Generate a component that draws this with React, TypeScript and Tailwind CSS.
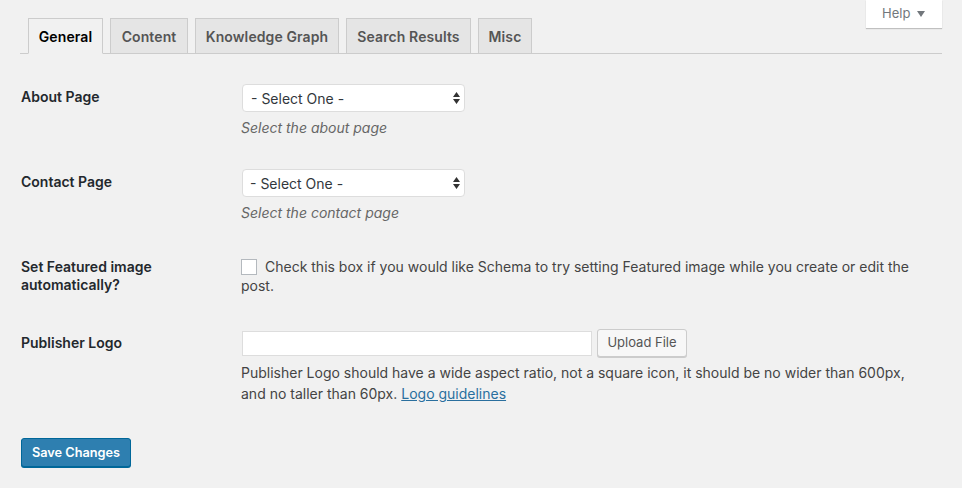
const tabs = [
  { label: 'General', width: 'w-[75px]' },
  { label: 'Content', width: 'w-[78px]' },
  { label: 'Knowledge Graph', width: 'w-[144px]' },
  { label: 'Search Results', width: 'w-[125px]' },
  { label: 'Misc', width: 'w-[54px]' },
];

export default function App() {
  return (
    <div className="relative w-[962px] h-[488px] overflow-hidden bg-[#f1f1f1] font-['Inter',sans-serif] text-[14px] text-[#444]">
      <div className="absolute left-[866px] top-0 w-[76px] h-[28px] bg-white shadow-[0_1px_1px_rgba(0,0,0,0.2)] flex items-center pl-[16px] gap-[7px] text-[13px] text-[#72777c]">
        Help <span className="w-0 h-0 border-x-[4px] border-x-transparent border-t-[6px] border-t-[#72777c]" />
      </div>
      <div className="ml-[20px] mr-[20px] h-[54px] border-b border-[#ccc] flex items-end pl-[8px] gap-[7px]">
        {tabs.map((t, i) => (
          <div key={t.label} className={`${t.width} h-[36px] -mb-px border border-[#ccc] font-semibold tracking-[0.1px] flex items-center justify-center ${i === 0 ? 'border-b-[#f1f1f1] bg-[#f1f1f1] text-[#000]' : 'bg-[#e5e5e5] text-[#555]'}`}>{t.label}</div>
        ))}
      </div>
      <div className="ml-[21px] mr-[20px] flex flex-col">
        <div className="flex mt-[30px]">
          <div className="w-[221px] font-semibold text-[#23282d] leading-[20px] pt-[3px]">About Page</div>
          <div>
            <div className="w-[223px] h-[28px] bg-white border border-[#ddd] rounded-[4px] flex items-center justify-between pl-[8px] pr-[4px] text-[#32373c]">- Select One - <Arrows /></div>
            <div className="italic text-[#666] mt-[6px] -ml-px leading-[20px]">Select the about page</div>
          </div>
        </div>
        <div className="flex mt-[31px]">
          <div className="w-[221px] font-semibold text-[#23282d] leading-[20px] pt-[3px]">Contact Page</div>
          <div>
            <div className="w-[223px] h-[28px] bg-white border border-[#ddd] rounded-[4px] flex items-center justify-between pl-[7px] pr-[4px] text-[#32373c]">- Select One - <Arrows /></div>
            <div className="italic text-[#666] mt-[6px] -ml-px leading-[20px]">Select the contact page</div>
          </div>
        </div>
        <div className="flex mt-[34px]">
          <div className="w-[220px] font-semibold text-[#23282d] leading-[18px] pt-[1px]">Set Featured image<br />automatically?</div>
          <div className="w-[680px] leading-[19px]">
            <span className="inline-block w-[16px] h-[16px] bg-white border border-[#b4b9be] align-[-3px] mr-[8px]" />
            Check this box if you would like Schema to try setting Featured image while you create or edit the post.
          </div>
        </div>
        <div className="flex mt-[34px]">
          <div className="w-[221px] font-semibold text-[#23282d] leading-[20px] pt-[4px]">Publisher Logo</div>
          <div className="w-[680px]">
            <div className="flex items-center gap-[5px]">
              <div className="w-[350px] h-[25px] bg-white border border-[#ddd]" />
              <div className="h-[28px] w-[90px] bg-[#f7f7f7] border border-[#ccc] rounded-[3px] text-[13px] text-[#555] flex items-center justify-center shadow-[0_1px_0_#ccc]">Upload File</div>
            </div>
            <div className="mt-[5px] -ml-px leading-[21px]">Publisher Logo should have a wide aspect ratio, not a square icon, it should be no wider than 600px, and no taller than 60px. <span className="underline text-[#2a6f9e]">Logo guidelines</span></div>
          </div>
        </div>
        <div className="mt-[34px] w-[110px] h-[29px] bg-[#2e7fb0] border border-[#006799] rounded-[3px] text-white font-semibold text-[12.75px] flex items-center justify-center shadow-[0_1px_0_#006799]">Save Changes</div>
      </div>
    </div>
  );
}

function Arrows() {
  return (
    <svg width="7" height="12" viewBox="0 0 7 12" fill="#333">
      <path d="M3.5 0 L7 5 H0 Z M0 7 H7 L3.5 12 Z" />
    </svg>
  );
}
